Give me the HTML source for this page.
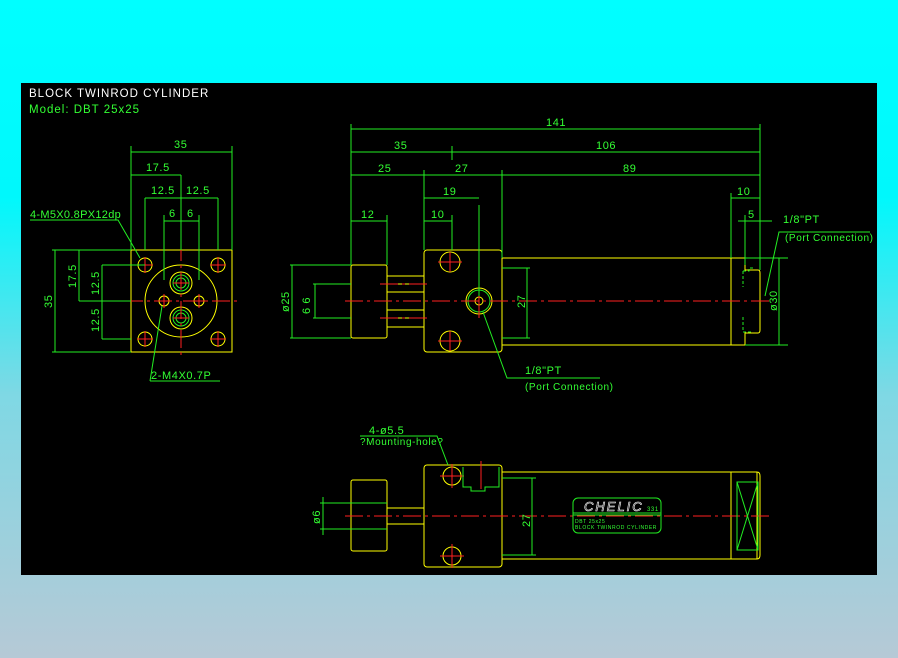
<!DOCTYPE html>
<html><head><meta charset="utf-8"><style>
html,body{margin:0;padding:0;}
body{width:898px;height:658px;background:linear-gradient(#00ffff 0%,#00f8fc 30%,#7fd8e4 60%,#b6c9d6 100%);overflow:hidden;position:relative;}
svg{position:absolute;left:0;top:0;}
text{font-family:"Liberation Sans",sans-serif;font-size:11px;fill:#33ff33;letter-spacing:0.6px;}
.y{stroke:#ffff00;fill:none;stroke-width:1;}
.g{stroke:#22ee22;fill:none;stroke-width:1;}
.r{stroke:#ff2020;fill:none;stroke-width:1;}
.rd{stroke:#ff2020;fill:none;stroke-width:1;stroke-dasharray:18 4 3 4;}
</style></head><body>
<svg width="898" height="658" viewBox="0 0 898 658">
<rect x="21" y="83" width="856" height="492" fill="#000"/>
<text x="29" y="97" style="fill:#fff;font-size:11.5px;letter-spacing:1px">BLOCK TWINROD CYLINDER</text>
<text x="29" y="113" style="font-size:11.5px;letter-spacing:1px">Model: DBT 25x25</text>

<!-- FRONT VIEW -->
<rect class="y" x="131" y="250" width="101" height="102"/>
<circle class="y" cx="181" cy="301" r="36"/>
<g class="y">
<circle cx="145" cy="265" r="7"/><circle cx="218" cy="265" r="7"/>
<circle cx="145" cy="339" r="7"/><circle cx="218" cy="339" r="7"/>
<circle cx="164" cy="301" r="5"/><circle cx="199" cy="301" r="5"/>
<circle cx="181" cy="283" r="11"/><circle cx="181" cy="318" r="11"/>
</g>
<g class="g"><circle cx="181" cy="283" r="8"/><circle cx="181" cy="283" r="5"/><circle cx="181" cy="318" r="8"/><circle cx="181" cy="318" r="5"/></g>
<g class="r">
<path d="M137 265h16M145 257v16M210 265h16M218 257v16M137 339h16M145 331v16M210 339h16M218 331v16M157 301h14M164 294v14M192 301h14M199 294v14M173 283h16M173 318h16"/>
</g>
<path class="rd" d="M125 301H238M181 243V358"/>
<g class="g">
<path d="M131 250V146M232 250V146M131 152H232M131 175H181M181 175V250M145 198H218M145 198V250M218 198V250M164 221H199M164 215V280M199 215V280"/>
<path d="M131 250H52M131 352H52M55 250V352M79 250V301M79 301H131M102 265V339M102 265H145M102 339H131"/>
<path d="M30 220H118L140 258M150 381H220M150 381L162 306"/>
</g>
<text x="174" y="148">35</text>
<text x="146" y="171">17.5</text>
<text x="151" y="194">12.5</text><text x="186" y="194">12.5</text>
<text x="169" y="217">6</text><text x="187" y="217">6</text>
<text transform="translate(52,308) rotate(-90)">35</text>
<text transform="translate(76,288) rotate(-90)">17.5</text>
<text transform="translate(99,295) rotate(-90)">12.5</text>
<text transform="translate(99,332) rotate(-90)">12.5</text>
<text x="30" y="218" style="letter-spacing:0.3px">4-M5X0.8PX12dp</text>
<text x="151" y="379">2-M4X0.7P</text>

<!-- SIDE VIEW -->
<rect class="y" x="351" y="265" width="36" height="73" rx="2"/>
<path class="y" d="M387 276H424M387 284H424M387 292H424M387 310H424M387 318H424M387 327H424"/>
<rect class="y" x="424" y="250" width="78" height="102" rx="3"/>
<path class="y" d="M502 258H731V345H502M731 258H745V270H758Q760 270 760 273V330Q760 333 758 333H745V345H731"/>
<circle class="y" cx="450" cy="262" r="10"/><circle class="y" cx="450" cy="341" r="10"/>
<circle class="y" cx="479" cy="301" r="13"/><circle class="g" cx="479" cy="301" r="11"/><circle class="y" cx="479" cy="301" r="4"/>
<path class="r" d="M438 262h24M450 252v20M438 341h24M450 331v20M479 284v34"/>
<path class="rd" d="M345 301H770M380 284H430M380 318H430"/>
<path class="g" d="M743 271h6v-3h4M743 271v16M743 317v15h10" stroke-dasharray="3 2"/>
<g class="g">
<path d="M351 265V124M760 270V124M351 129H760M452 146V160M351 152H760M424 250V170M502 258V170M351 175H760M479 205V296M424 198H479M452 215V250M424 221H452M387 265V215M351 221H387M731 258V193M745 215V265M731 198H760M738 221H772"/>
<path d="M290 265H351M290 338H351M292 265V338M313 284H351M313 318H351M315 284V318M502 268H530M502 338H530M527 268V338M745 258H788M745 345H788M779 258V345"/>
<path d="M483 312L507 378H600M765 296L779 232H870"/>
</g>
<text x="546" y="126">141</text>
<text x="394" y="149">35</text><text x="596" y="149">106</text>
<text x="378" y="172">25</text><text x="455" y="172">27</text><text x="623" y="172">89</text>
<text x="443" y="195">19</text><text x="737" y="195">10</text>
<text x="361" y="218">12</text><text x="431" y="218">10</text><text x="748" y="218">5</text>
<text x="783" y="223">1/8"PT</text>
<text x="785" y="241" style="font-size:10px">(Port Connection)</text>
<text x="525" y="374">1/8"PT</text>
<text x="525" y="390" style="font-size:10px">(Port Connection)</text>
<text transform="translate(289,312) rotate(-90)">ø25</text>
<text transform="translate(310,314) rotate(-90)">6 6</text>
<text transform="translate(525,308) rotate(-90)">27</text>
<text transform="translate(777,311) rotate(-90)">ø30</text>

<!-- BOTTOM VIEW -->
<rect class="y" x="351" y="480" width="36" height="71" rx="2"/>
<path class="y" d="M387 508H424M387 524H424"/>
<rect class="y" x="424" y="465" width="78" height="102" rx="3"/>
<path class="y" d="M502 472H757V559H502M731 472V559M757 472Q760 472 760 476V555Q760 559 757 559"/>
<circle class="y" cx="452" cy="476" r="9"/><circle class="y" cx="452" cy="556" r="9"/>
<path class="r" d="M440 476h24M452 464v24M440 556h24M452 544v24M481 461v28"/>
<path class="rd" d="M345 516H770"/>
<path class="g" d="M463 467v20h8v4h14v-4h14v-20M737 482h21v68h-21zM737 482L758 550M758 482L737 550"/>
<rect class="g" x="573" y="498" width="88" height="35" rx="5"/>
<path class="g" d="M573 513H661M573 515H661"/>
<text x="584" y="511" style="font-style:italic;font-size:13px;fill:none;stroke:#fff;stroke-width:0.6;letter-spacing:2px">CHELIC</text>
<text x="647" y="511" style="font-size:6px">331</text>
<text x="575" y="523" style="font-size:5px">DBT 25x25</text>
<text x="575" y="529" style="font-size:5px">BLOCK TWINROD CYLINDER</text>
<g class="g">
<path d="M320 503H387M320 529H387M323 497V535M502 478H536M502 555H536M532 478V555M360 436H437L448 465"/>
</g>
<text transform="translate(320,524) rotate(-90)">ø6</text>
<text transform="translate(530,527) rotate(-90)">27</text>
<text x="369" y="434">4-ø5.5</text>
<text x="360" y="445" style="font-size:10px">?Mounting-hole?</text>
</svg>
</body></html>
